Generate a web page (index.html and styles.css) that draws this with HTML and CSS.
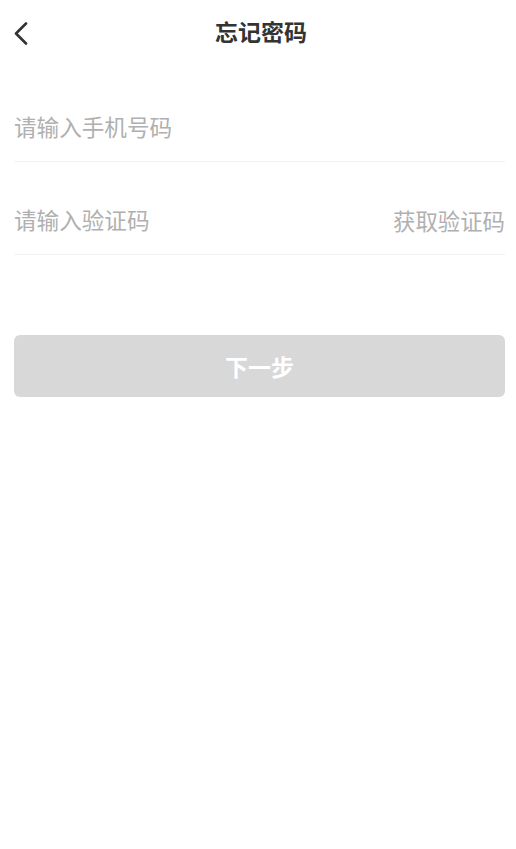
FILE: index.html
```html
<!DOCTYPE html>
<html lang="zh-CN">
<head>
<meta charset="utf-8">
<title>忘记密码</title>
<link rel="stylesheet" href="styles.css">
</head>
<body>
<div class="page">
  <header class="header">
    <button class="back" aria-label="返回">
      <svg width="16" height="24" viewBox="0 0 16 24"><path d="M13 2.5 L3 12.5 L13 22.5" fill="none" stroke="#333" stroke-width="2.6" stroke-linecap="round" stroke-linejoin="round"/></svg>
    </button>
    <h1 class="title">忘记密码</h1>
  </header>
  <div class="form">
    <div class="row">
      <input class="field" type="text" placeholder="请输入手机号码">
    </div>
    <div class="row">
      <input class="field" type="text" placeholder="请输入验证码">
      <span class="code">获取验证码</span>
    </div>
  </div>
  <button class="next">下一步</button>
</div>
</body>
</html>
```
FILE: styles.css
```css
* { box-sizing: border-box; }
html, body { margin: 0; padding: 0; background: #fff; }
body { font-family: "Noto Sans CJK SC", "Noto Sans", sans-serif; width: 516px; height: 849px; }
.page { display: flex; flex-direction: column; }
.header { position: relative; height: 66px; display: flex; align-items: center; justify-content: center; padding-left: 6px; padding-bottom: 4px; }
.back { position: absolute; left: 13px; top: 21px; border: 0; background: none; padding: 0; width: 18px; height: 25px; display: flex; }
.title { margin: 0; font-size: 23px; font-weight: 700; color: #333; line-height: 1; }
.form { margin-top: 3px; padding: 0 11px 0 14px; }
.row { height: 93px; display: flex; align-items: flex-end; padding-bottom: 22px; border-bottom: 1px solid #f3f3f3; }
.field { flex: 1; border: 0; outline: none; padding: 0; font-family: inherit; font-size: 22.6px; line-height: 24px; height: 24px; color: #333; background: transparent; min-width: 0; }
.field::placeholder { color: #b0b0b0; }
.code { font-size: 22.4px; line-height: 24px; color: #b0b0b0; }
.next { margin: 80px 11px 0 14px; height: 62px; border: 0; border-radius: 6px; background: #d8d8d8; color: #fff; font-family: inherit; font-size: 23px; font-weight: 700; padding-bottom: 2px; }
```
